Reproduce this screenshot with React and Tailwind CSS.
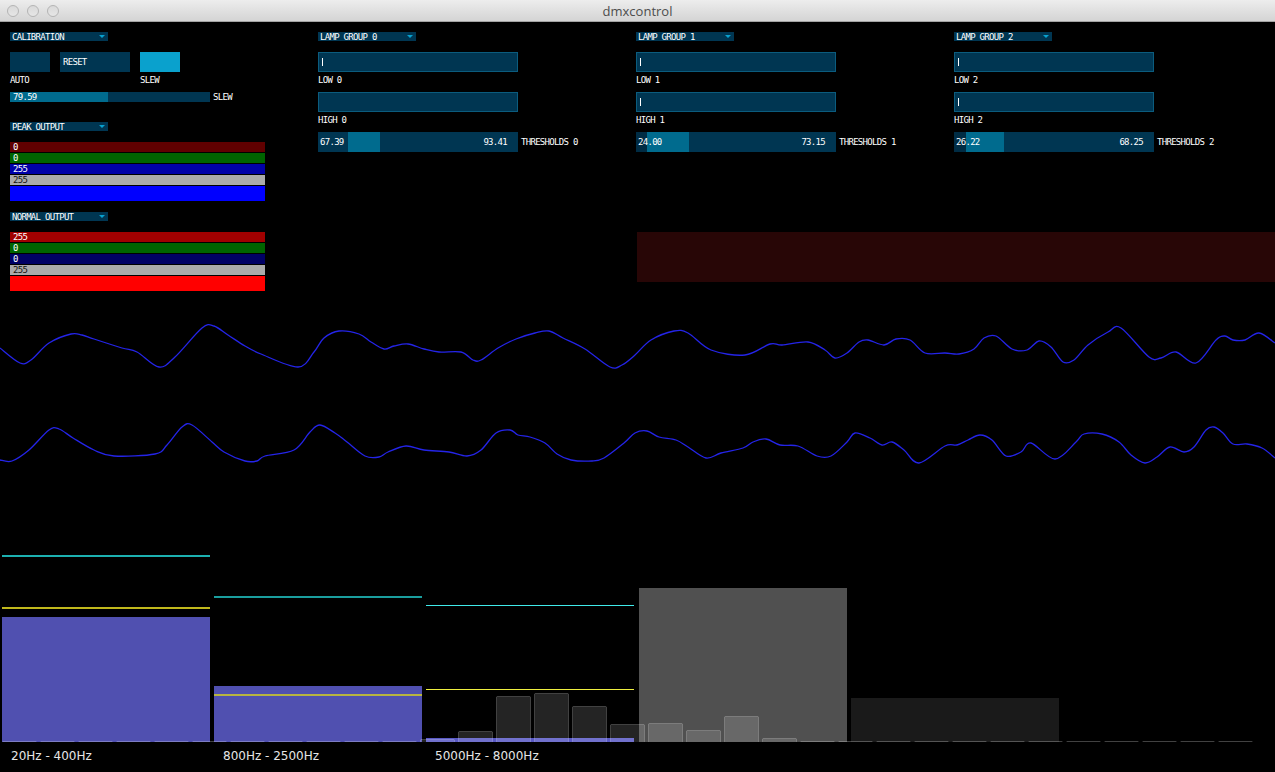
import React from "react";

const F = "font-['DejaVu_Sans_Mono',monospace] text-[9px] leading-[9px] tracking-[-0.7px] text-white";

const wave1 =
  "0,348 20,363 31,360 49,343 71,334 82,335 94,339 122,348 137,352 159,367 175,357 202,328 214,326 228,335 245,346 261,354 298,367 314,352 324,338 339,331 359,334 371,342 384,349 394,346 408,344 424,349 439,352 461,352 473,360 481,360 498,348 516,339 535,333 549,331 563,338 585,349 610,367 622,365 635,355 651,340 674,331 688,333 711,350 745,355 770,344 782,345 808,342 825,350 835,358 847,353 859,342 868,340 884,345 896,339 910,340 925,353 945,353 959,354 974,349 984,338 996,336 1012,349 1027,350 1039,341 1051,347 1063,362 1074,360 1088,345 1108,332 1121,328 1149,357 1161,358 1176,352 1196,363 1216,340 1225,336 1233,340 1245,340 1259,333 1275,343";
const wave2 =
  "0,460 12,461 29,450 49,430 59,429 73,438 94,450 114,456 155,454 167,445 182,427 192,425 212,442 224,452 245,461 257,461 265,456 294,450 310,432 320,425 335,433 347,442 365,456 379,457 388,452 406,446 424,450 449,452 467,456 481,450 496,433 510,430 518,435 530,437 545,443 557,454 571,460 592,461 604,458 624,443 635,433 647,431 659,437 676,440 688,447 706,458 721,453 743,448 753,442 766,439 780,445 798,446 817,456 831,456 847,442 855,433 870,438 882,445 892,442 904,450 919,463 945,446 957,445 968,440 980,435 992,440 1006,456 1021,452 1031,443 1055,459 1076,442 1084,434 1102,434 1119,442 1131,455 1145,463 1157,457 1170,447 1184,452 1194,447 1206,430 1214,427 1223,433 1233,444 1247,444 1262,448 1275,458";

function smoothPath(str) {
  const p = str.split(" ").map((s) => s.split(",").map(Number));
  let d = `M${p[0][0]},${p[0][1]}`;
  for (let i = 0; i < p.length - 1; i++) {
    const p0 = p[i - 1] || p[i];
    const p1 = p[i];
    const p2 = p[i + 1];
    const p3 = p[i + 2] || p2;
    const c1x = p1[0] + (p2[0] - p0[0]) / 6;
    const c1y = p1[1] + (p2[1] - p0[1]) / 6;
    const c2x = p2[0] - (p3[0] - p1[0]) / 6;
    const c2y = p2[1] - (p3[1] - p1[1]) / 6;
    d += ` C${c1x.toFixed(1)},${c1y.toFixed(1)} ${c2x.toFixed(1)},${c2y.toFixed(1)} ${p2[0]},${p2[1]}`;
  }
  return d;
}

const barHeights = [1, 1, 1, 1, 1, 1, 1, 1, 1, 1, 1, 3, 11, 46, 49, 36, 18, 19, 12, 26, 4, 1, 1, 1, 1, 1, 1, 1, 1, 1, 1, 1, 1];

function Arrow() {
  return (
    <svg width="6" height="3" viewBox="0 0 6 3" className="block">
      <polygon points="0,0 6,0 3,3" fill="#08a2cf" />
    </svg>
  );
}

function Dropdown({ label }) {
  return (
    <div className={`w-[98px] h-[9px] bg-[#003652] flex items-center justify-between pl-[2px] pr-[3px] ${F}`}>
      <span className="translate-y-[1px]">{label}</span>
      <Arrow />
    </div>
  );
}

function Label({ children }) {
  return <div className={`h-[20px] pt-[4px] ${F}`}>{children}</div>;
}

function Bars({ rows, last }) {
  return (
    <div className="w-[255px] flex flex-col gap-[1px]">
      {rows.map((r, i) => (
        <div key={i} className={`h-[10px] flex items-center pl-[3px] ${r.bg} ${F}`}>
          <span className={r.dark ? "text-[#111]" : "text-white"}>{r.v}</span>
        </div>
      ))}
      <div className={`h-[15px] ${last}`} />
    </div>
  );
}

function TextField({ cursor }) {
  return (
    <div className="w-[200px] h-[20px] bg-[#003652] border border-[#0b5c7e] flex items-center pl-[3px]">
      {cursor && <div className="w-px h-[8px] bg-white" />}
    </div>
  );
}

const groups = [
  { n: 0, lowC: true, highC: false, lo: "67.39", hi: "93.41", pre: "w-[30px] bg-[#003652]", hl: "w-[32px]" },
  { n: 1, lowC: true, highC: true, lo: "24.00", hi: "73.15", pre: "w-[11px] bg-[#002c44]", hl: "w-[42px]" },
  { n: 2, lowC: true, highC: true, lo: "26.22", hi: "68.25", pre: "w-[12px] bg-[#002c44]", hl: "w-[38px]" },
];

function LampGroup({ g }) {
  return (
    <div className="w-[318px] flex flex-col">
      <div className="mb-[11px]">
        <Dropdown label={`LAMP GROUP ${g.n}`} />
      </div>
      <TextField cursor={g.lowC} />
      <Label>{`LOW ${g.n}`}</Label>
      <TextField cursor={g.highC} />
      <Label>{`HIGH ${g.n}`}</Label>
      <div className="flex items-center gap-[3px]">
        <div className="relative w-[200px] h-[20px] bg-[#003652] flex">
          <div className={`h-full ${g.pre}`} />
          <div className={`h-full bg-[#006b8e] ${g.hl}`} />
          <span className={`absolute left-[2px] top-[6px] ${F}`}>{g.lo}</span>
          <span className={`absolute right-[11px] top-[6px] ${F}`}>{g.hi}</span>
        </div>
        <span className={F}>{`THRESHOLDS ${g.n}`}</span>
      </div>
    </div>
  );
}

function TitleBar() {
  return (
    <div className="h-[22px] shrink-0 grid grid-cols-[1fr_auto_1fr] items-center bg-linear-to-b from-[#ededed] to-[#d4d4d4] border-b border-[#a3a3a3]">
      <div className="flex gap-[8px] pl-[7px]">
        {[0, 1, 2].map((i) => (
          <div key={i} className="w-[12px] h-[12px] rounded-full bg-linear-to-b from-[#d9d9d9] to-[#e6e6e6] border border-[#b4b4b4]" />
        ))}
      </div>
      <div className="font-['Open_Sans','DejaVu_Sans',sans-serif] text-[13px] leading-[16px] text-[#4d4d4d]">dmxcontrol</div>
      <div />
    </div>
  );
}

export default function App() {
  return (
    <div className="w-[1275px] h-[772px] bg-black flex flex-col overflow-hidden">
      <TitleBar />
      {/* controls */}
      <div className="h-[270px] shrink-0 flex pt-[10px] pl-[10px]">
        <div className="w-[308px] flex flex-col">
          <div className="mb-[11px]">
            <Dropdown label="CALIBRATION" />
          </div>
          <div className="flex gap-[10px] h-[20px]">
            <div className="w-[40px] bg-[#003652]" />
            <div className={`w-[70px] bg-[#003652] flex items-center pl-[3px] ${F}`}>RESET</div>
            <div className="w-[40px] bg-[#0aa1cd]" />
          </div>
          <div className="flex h-[20px]">
            <div className="w-[130px]">
              <Label>AUTO</Label>
            </div>
            <Label>SLEW</Label>
          </div>
          <div className="flex items-center gap-[3px] h-[10px]">
            <div className="relative w-[200px] h-[10px] bg-[#003652]">
              <div className="h-full w-[98px] bg-[#006b8e]" />
              <span className={`absolute left-[3px] top-[1px] ${F}`}>79.59</span>
            </div>
            <span className={F}>SLEW</span>
          </div>
          <div className="mt-[20px] mb-[11px]">
            <Dropdown label="PEAK OUTPUT" />
          </div>
          <Bars
            rows={[
              { v: "0", bg: "bg-[#600000]" },
              { v: "0", bg: "bg-[#006400]" },
              { v: "255", bg: "bg-[#0000a8]" },
              { v: "255", bg: "bg-[#aaaaaa]", dark: true },
            ]}
            last="bg-[#0000ff]"
          />
          <div className="mt-[11px] mb-[11px]">
            <Dropdown label="NORMAL OUTPUT" />
          </div>
          <Bars
            rows={[
              { v: "255", bg: "bg-[#a00000]" },
              { v: "0", bg: "bg-[#006400]" },
              { v: "0", bg: "bg-[#000064]" },
              { v: "255", bg: "bg-[#aaaaaa]", dark: true },
            ]}
            last="bg-[#ff0000]"
          />
        </div>
        <div className="flex-1 flex flex-col">
          <div className="flex">
            {groups.map((g) => (
              <LampGroup key={g.n} g={g} />
            ))}
          </div>
          <div className="mt-[80px] ml-[319px] w-[638px] h-[50px] bg-[#280606]" />
        </div>
      </div>

      {/* waves */}
      <svg width="1275" height="190" viewBox="0 292 1275 190" className="block shrink-0">
        <path d={smoothPath(wave1)} fill="none" stroke="#2424e8" strokeWidth="1.3" strokeLinejoin="round" />
        <path d={smoothPath(wave2)} fill="none" stroke="#2424e8" strokeWidth="1.3" strokeLinejoin="round" />
      </svg>

      {/* spectrum */}
      <svg width="1275" height="260" viewBox="0 482 1275 260" className="block shrink-0" shapeRendering="crispEdges">
        <rect x="2" y="617" width="208" height="125" fill="#5050b0" />
        <rect x="214" y="686" width="208" height="56" fill="#5050b0" />
        <rect x="426" y="738" width="208" height="4" fill="#5a5ac4" />
        <rect x="639" y="588" width="208" height="154" fill="#505050" />
        <rect x="851" y="698" width="208" height="44" fill="#1a1a1a" />
        {barHeights.map((h, k) => (
          <rect
            key={k}
            x={2 + 38 * k + 0.5}
            y={742 - h + 0.5}
            width="34"
            height={h}
            rx="1"
            fill="rgba(255,255,255,0.14)"
            stroke="rgba(255,255,255,0.2)"
            strokeWidth="1"
            shapeRendering="auto"
          />
        ))}
        <rect x="2" y="555" width="208" height="2" fill="#1cb0b0" />
        <rect x="2" y="607" width="208" height="2" fill="#c0b81c" />
        <rect x="214" y="596" width="208" height="2" fill="#1a9e9e" />
        <rect x="214" y="694" width="208" height="2" fill="#b8b440" />
        <rect x="426" y="605" width="208" height="1" fill="#40eaea" />
        <rect x="426" y="689" width="208" height="1" fill="#f0f040" />
      </svg>

      {/* labels */}
      <div className="flex-1 flex pt-[6px] font-['DejaVu_Sans',sans-serif] text-[12px] leading-[16px] text-[#e6e6e6]">
        <div className="w-[212px] pl-[11px]">20Hz - 400Hz</div>
        <div className="w-[212px] pl-[11px]">800Hz - 2500Hz</div>
        <div className="w-[212px] pl-[11px]">5000Hz - 8000Hz</div>
      </div>
    </div>
  );
}
